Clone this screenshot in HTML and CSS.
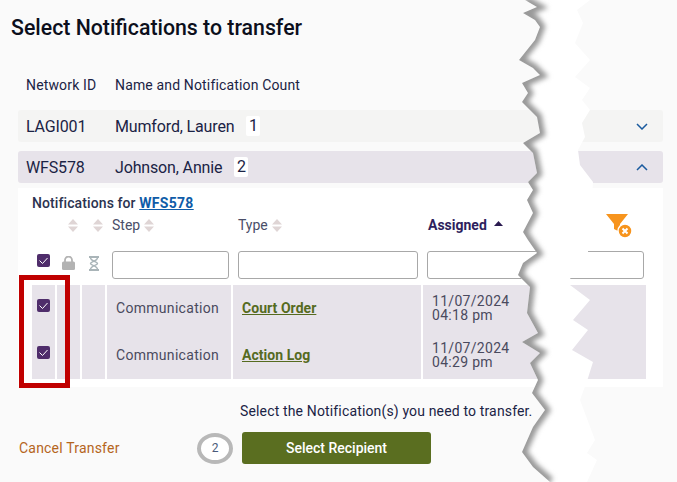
FILE: index.html
```html
<!DOCTYPE html>
<html>
	<head>
		<meta charset="UTF-8">
		<title>Select Notifications to transfer</title>
		<link rel="stylesheet" href="styles.css">
	</head>
	<body>
		<div class="page">
			<div class="page-title">Select Notifications to transfer</div>
			<div class="list-head">
				<div class="list-id">Network ID</div>
				<div>Name and Notification Count</div>
			</div>
			<div class="list-row">
				<div class="list-id">LAGI001</div>
				<div>Mumford, Lauren</div>
				<div class="list-count">1</div>
				<svg class="list-chev" width="12" height="7" viewBox="0 0 12 7"><path d="M1 1l5 5 5-5"/></svg>
			</div>
			<div class="list-row list-row-open">
				<div class="list-id">WFS578</div>
				<div>Johnson, Annie</div>
				<div class="list-count">2</div>
				<svg class="list-chev" width="12" height="7" viewBox="0 0 12 7"><path d="M1 6l5-5 5 5"/></svg>
			</div>
			<div class="panel">
				<div class="panel-title">Notifications for <a href="#">WFS578</a></div>
				<div class="table">
					<!-- header -->
					<div class="th"></div>
					<div class="th th-center"><svg class="sort" width="10" height="13" viewBox="0 0 10 13"><path d="M5 0l5 5.500H0zM0 7.500h10L5 13z"/></svg></div>
					<div class="th th-center"><svg class="sort" width="10" height="13" viewBox="0 0 10 13"><path d="M5 0l5 5.500H0zM0 7.500h10L5 13z"/></svg></div>
					<div class="th th-step">Step <svg class="sort" width="10" height="13" viewBox="0 0 10 13"><path d="M5 0l5 5.500H0zM0 7.500h10L5 13z"/></svg></div>
					<div class="th th-type">Type <svg class="sort" width="10" height="13" viewBox="0 0 10 13"><path d="M5 0l5 5.500H0zM0 7.500h10L5 13z"/></svg></div>
					<div class="th th-assigned">
						<span>Assigned</span>
						<svg class="sort-up" width="9" height="5" viewBox="0 0 9 5"><path d="M4.500 0l4.500 5H0z"/></svg>
						<svg class="clear-filter" width="26" height="24" viewBox="0 0 26 24">
							<path d="M0 0h22l-8 10v8l-6-3v-5z" fill="#f7941d"/>
							<circle cx="19" cy="17" r="7" fill="#f7941d" stroke="#fff" stroke-width="1.500"/>
							<path d="M16.500 14.500l5 5M21.500 14.500l-5 5" stroke="#fff" stroke-width="2"/>
						</svg>
					</div>
					<!-- filter -->
					<div class="tf tf-center">
						<svg width="13" height="13" viewBox="0 0 13 13"><rect width="13" height="13" rx="2" fill="#4f2d6b"/><path d="M2.500 6.500l3 3 5-5.500" fill="none" stroke="#fff"/></svg>
					</div>
					<div class="tf tf-center tf-icon">
						<svg width="13" height="14" viewBox="0 0 13 14"><path d="M3 6V4a3.500 3.500 0 0 1 7 0v2" fill="none" stroke="#b3b3b3" stroke-width="1.800"/><rect y="5.500" width="13" height="8.500" rx="1.500" fill="#b3b3b3"/></svg>
					</div>
					<div class="tf tf-center tf-icon">
						<svg width="12" height="15" viewBox="0 0 12 15"><path d="M1 1h10M1 14h10" stroke="#a9b4b8" stroke-width="2"/><path d="M2.500 1.500c0 4 7 4 7 6s-7 2-7 6M9.500 1.500c0 4-7 4-7 6s7 2 7 6" fill="none" stroke="#a9b4b8" stroke-width="1.500"/></svg>
					</div>
					<div class="tf tf-step"><input type="text"></div>
					<div class="tf tf-type"><input type="text"></div>
					<div class="tf tf-assigned"><input type="text"></div>
					<!-- rows -->
					<div class="td td-center">
						<svg class="td-check" width="13" height="13" viewBox="0 0 13 13"><rect width="13" height="13" rx="2" fill="#4f2d6b"/><path d="M2.500 6.500l3 3 5-5.500" fill="none" stroke="#fff"/></svg>
					</div>
					<div class="td"></div>
					<div class="td"></div>
					<div class="td td-step">Communication</div>
					<div class="td td-type"><a href="#">Court Order</a></div>
					<div class="td td-date">11/07/2024<br>04:18 pm</div>
					<div class="td td-center">
						<svg class="td-check" width="13" height="13" viewBox="0 0 13 13"><rect width="13" height="13" rx="2" fill="#4f2d6b"/><path d="M2.500 6.500l3 3 5-5.500" fill="none" stroke="#fff"/></svg>
					</div>
					<div class="td"></div>
					<div class="td"></div>
					<div class="td td-step">Communication</div>
					<div class="td td-type"><a href="#">Action Log</a></div>
					<div class="td td-date">11/07/2024<br>04:29 pm</div>
				</div>
			</div>
			<div class="hint">Select the Notification(s) you need to transfer.</div>
			<div class="foot">
				<a class="foot-cancel" href="#">Cancel Transfer</a>
				<div class="foot-count">2</div>
				<div class="foot-button">Select Recipient</div>
			</div>
			<div class="callout"></div>
			<svg class="tear" width="677" height="482" viewBox="0 0 677 482">
				<defs>
					<clipPath id="tearClip">
						<polygon points="525,0 537,7 523,13 535,20 540,27 535,40 519,60 533,68 540,75 522,83 528,93 522,102 537,117 540,133 523,143 533,153 537,173 528,182 533,190 527,200 533,213 523,232 528,240 537,253 523,263 518,275 530,287 527,313 538,333 522,342 540,353 530,363 538,380 532,393 545,410 533,427 522,452 533,467 550,482 587,482 597,460 587,453 595,440 580,400 588,378 593,362 572,350 588,330 573,320 590,300 570,285 570,279 588,252 593,182 580,165 578,150 585,137 582,123 590,110 582,100 590,88 575,77 590,60 575,43 583,23 577,10 590,0"/>
					</clipPath>
				</defs>
				<g clip-path="url(#tearClip)">
					<rect width="677" height="482" fill="#fff"/>
					<polyline class="tear-shadow" points="525,0 537,7 523,13 535,20 540,27 535,40 519,60 533,68 540,75 522,83 528,93 522,102 537,117 540,133 523,143 533,153 537,173 528,182 533,190 527,200 533,213 523,232 528,240 537,253 523,263 518,275 530,287 527,313 538,333 522,342 540,353 530,363 538,380 532,393 545,410 533,427 522,452 533,467 550,482"/>
				</g>
			</svg>
		</div>
	</body>
</html>
```

FILE: styles.css
```css
body{margin: 0px; background: #fafafa; font-family: Roboto, "Liberation Sans", sans-serif; font-size: 14px; color: #1b2345;}
.page{position: relative; width: 677px; height: 482px; overflow: hidden; padding: 16px 14px 0px 18px; box-sizing: border-box;}
.page-title{margin-left: -7px; height: 24px; line-height: 24px; font-size: 21.3px; font-weight: 500; color: #0c0f1c;}

.list-head{display: flex; align-items: center; height: 20px; margin-top: 35px; letter-spacing: 0.15px;}
.list-id{width: 97px; padding-left: 8px; box-sizing: border-box;}
.list-row{display: flex; align-items: center; height: 32px; margin-top: 15px; padding-right: 15px; background: #f4f4f3; border-radius: 3px; font-size: 16px; letter-spacing: -0.15px;}
.list-row-open{margin-top: 9px; background: #e7e3ea;}
.list-count{margin-left: 12px; width: 14px; height: 20px; line-height: 20px; text-align: center; background: #fff; border-radius: 2px;}
.list-chev{margin-left: auto; fill: none; stroke: #1a5a9e; stroke-width: 1.500;}

.panel{margin-top: 5px; height: 199px; padding: 7px 17px 0px 14px; background: #fff; box-sizing: border-box;}
.panel-title{height: 16px; line-height: 16px; font-weight: 500; color: #2b3350; letter-spacing: 0.1px;}
.panel-title a{color: #0f5ca8; font-weight: 700; letter-spacing: 0.3px;}

.table{display: grid; grid-template-columns: 23px 23px 23px 124px 188px 1fr; grid-template-rows: 28px 46px 47px 47px; column-gap: 2px;}
.th{display: flex; align-items: center; color: #4a4e68; gap: 4px;}
.th-center{justify-content: center; padding-left: 9px;}
.th-step{padding-left: 5px;}
.th-type{padding-left: 5px;}
.th-assigned{padding-left: 5px; gap: 7px; color: #2e1f5e; font-weight: 700;}
.sort{fill: #dfd5d5;}
.sort-up{fill: #2a1a50; margin-top: -3px;}
.clear-filter{margin-left: 96px; margin-top: 2px;}
.tf{display: flex; align-items: flex-start; padding-top: 12px;}
.tf-center{justify-content: center; padding-top: 15px;}
.tf-icon{padding-top: 17px;}
.tf input{display: block; width: 100%; height: 28px; box-sizing: border-box; border: 1px solid #a8a8a8; border-radius: 3px; background: #fff;}
.tf-step{padding: 12px 2px 0px 5px;}
.tf-type{padding: 12px 3px 0px 5px;}
.tf-assigned{padding: 12px 2px 0px 4px;}
.td{display: flex; align-items: center; background: #e7e3ea; color: #4a4a5e; letter-spacing: 0.3px;}
.td-center{justify-content: center;}
.td-check{margin-top: -6px;}
.td-step{padding: 0px 0px 2px 9px;}
.td-type{padding: 0px 0px 2px 9px;}
.td-type a{color: #566b1f; font-weight: 700; letter-spacing: 0.05px;}
.td-date{padding: 0px 0px 1px 9px; line-height: 14px;}

.hint{margin-top: 16px; margin-left: 222px; height: 17px; line-height: 17px; letter-spacing: 0.15px;}
.foot{display: flex; align-items: center; height: 32px; margin-top: 12px;}
.foot-cancel{margin-left: 1px; width: 178px; color: #b5651d; text-decoration: none; letter-spacing: 0.2px;}
.foot-count{width: 36px; height: 31px; line-height: 23px; box-sizing: border-box; border: 4px solid #b8b8b8; border-radius: 50%; text-align: center; font-size: 12px; color: #4a5a7a; background: #fff;}
.foot-button{margin-left: 9px; width: 189px; height: 32px; line-height: 32px; text-align: center; background: #5a6e20; border-radius: 3px; color: #fff; font-weight: 500;}

.callout{position: absolute; left: 19px; top: 275px; width: 51px; height: 113px; box-sizing: border-box; border: 5px solid #c00000;}
.tear{position: absolute; left: 0px; top: 0px;}
.tear-shadow{fill: none; stroke: #999; stroke-width: 10; filter: blur(2.5px);}
```
